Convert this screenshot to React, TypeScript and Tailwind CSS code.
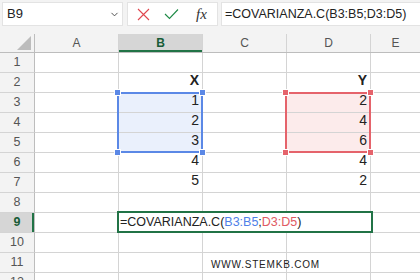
import { ChevronDown } from "lucide-react";

const cols = ["A", "B", "C", "D"];

const rows: Record<number, { b?: string; d?: string; bold?: boolean }> = {
	2: { b: "X", d: "Y", bold: true },
	3: { b: "1", d: "2" },
	4: { b: "2", d: "4" },
	5: { b: "3", d: "6" },
	6: { b: "4", d: "4" },
	7: { b: "5", d: "2" },
};

const Handle = ({ className }: { className: string }) => (
	<div className={`absolute w-[7px] h-[7px] border border-white ${className}`} />
);

export default function App() {
	return (
		<div className="w-[420px] h-[280px] overflow-hidden bg-white font-['Liberation_Sans',sans-serif] text-[#222]">
			{/* toolbar */}
			<div className="h-[34px] bg-[#f3f3f3] flex items-start pt-[2px] pl-[2px]">
				<div className="w-[121px] h-[24px] bg-white border border-[#e3e3e3] flex items-center justify-between pl-[4px] pr-[2px]">
					<span className="text-[13px] text-[#222]">B9</span>
					<ChevronDown size={11} strokeWidth={2} className="text-[#444]" />
				</div>
				<div className="ml-[4px] w-[91px] h-[24px] bg-white border border-[#e3e3e3] flex items-center">
					<svg width="13" height="13" viewBox="0 0 13 13" className="ml-[9px]">
						<path d="M1 1L12 12M12 1L1 12" stroke="#e0474f" strokeWidth="1.1" fill="none" />
					</svg>
					<svg width="15" height="12" viewBox="0 0 15 12" className="ml-[14px]">
						<path d="M1 6l4.5 4.5L14 1.5" stroke="#1e8a46" strokeWidth="1.1" fill="none" />
					</svg>
					<span className="ml-[17px] font-['Liberation_Serif',serif] italic text-[15px] text-[#333] leading-none">fx</span>
				</div>
				<div className="ml-[3px] flex-1 h-[24px] bg-white border border-[#e3e3e3] border-r-0 flex items-center pl-[3px]">
					<span className="text-[12.5px] text-[#222]">=COVARIANZA.C(B3:B5;D3:D5)</span>
				</div>
			</div>

			{/* grid */}
			<div className="relative">
				<div className="flex h-[19px] bg-[#f3f3f3] border-b border-[#bdbdbd]">
					<div className="w-[35px] border-r border-[#bdbdbd] relative">
						<svg width="16" height="16" viewBox="0 0 16 16" className="absolute right-[2px] bottom-[1px]">
							<path d="M15 1L15 15L1 15Z" fill="#bcbcbc" />
						</svg>
					</div>
					{cols.map((c) => (
						<div
							key={c}
							className={`w-[84px] border-r border-[#d4d4d4] flex items-center justify-center text-[12px] ${
								c === "B" ? "bg-[#d6d6d6] font-bold text-[#185c37] shadow-[inset_0_-2px_0_#217346]" : "text-[#555]"
							}`}
						>
							{c}
						</div>
					))}
					<div className="flex-1 flex items-center justify-center text-[12px] text-[#555]">E</div>
				</div>

				{Array.from({ length: 12 }, (_, i) => i + 1).map((r) => {
					const d = rows[r];
					const sel = r === 9;
					return (
						<div key={r} className="flex h-[20px]">
							<div
								className={`w-[35px] border-r border-b flex items-center justify-center text-[12.5px] ${
									sel
										? "bg-[#d6d6d6] font-bold text-[#185c37] border-r-[#bdbdbd] border-b-[#d4d4d4] shadow-[inset_-2px_0_0_#217346]"
										: "bg-[#f3f3f3] text-[#555] border-r-[#bdbdbd] border-b-[#d4d4d4]"
								}`}
							>
								{r}
							</div>
							<div className="w-[84px] border-r border-b border-[#d4d4d4]" />
							<div
								className={`w-[84px] border-r border-b border-[#d4d4d4] flex items-end justify-end pr-[3px] pb-[1px] text-[14px] ${
									r >= 3 && r <= 5 ? "bg-[#eaf0fc]" : ""
								} ${d?.bold ? "font-bold" : ""}`}
							>
								{d?.b}
							</div>
							<div className="w-[84px] border-r border-b border-[#d4d4d4]" />
							<div
								className={`w-[84px] border-r border-b border-[#d4d4d4] flex items-end justify-end pr-[3px] pb-[1px] text-[14px] ${
									r >= 3 && r <= 5 ? "bg-[#fcebeb]" : ""
								} ${d?.bold ? "font-bold" : ""}`}
							>
								{d?.d}
							</div>
							<div className="flex-1 border-b border-[#d4d4d4] relative">
								{r === 11 && (
									<span className="absolute left-[-160px] top-[4px] text-[10px] tracking-[0.8px] text-[#222] whitespace-nowrap">
										WWW.STEMKB.COM
									</span>
								)}
							</div>
						</div>
					);
				})}

				{/* blue range B3:B5 */}
				<div className="absolute left-[117px] top-[58px] w-[86px] h-[61px] border-2 border-[#5b88e6]">
					<Handle className="bg-[#5b88e6] -left-[5px] -top-[5px]" />
					<Handle className="bg-[#5b88e6] -right-[5px] -top-[5px]" />
					<Handle className="bg-[#5b88e6] -left-[5px] -bottom-[5px]" />
					<Handle className="bg-[#5b88e6] -right-[5px] -bottom-[5px]" />
				</div>
				{/* red range D3:D5 */}
				<div className="absolute left-[285px] top-[58px] w-[86px] h-[61px] border-2 border-[#e5636b]">
					<Handle className="bg-[#e5636b] -left-[5px] -top-[5px]" />
					<Handle className="bg-[#e5636b] -right-[5px] -top-[5px]" />
					<Handle className="bg-[#e5636b] -left-[5px] -bottom-[5px]" />
					<Handle className="bg-[#e5636b] -right-[5px] -bottom-[5px]" />
				</div>

				{/* active cell editor */}
				<div className="absolute left-[117px] top-[177px] w-[256px] h-[22px] border-2 border-[#217346] bg-white flex items-center pl-[1px] text-[12.5px] whitespace-nowrap">
					<span>=COVARIANZA.C(</span>
					<span className="text-[#4f7fe8]">B3:B5</span>
					<span>;</span>
					<span className="text-[#e05a63]">D3:D5</span>
					<span>)</span>
				</div>
			</div>
		</div>
	);
}
